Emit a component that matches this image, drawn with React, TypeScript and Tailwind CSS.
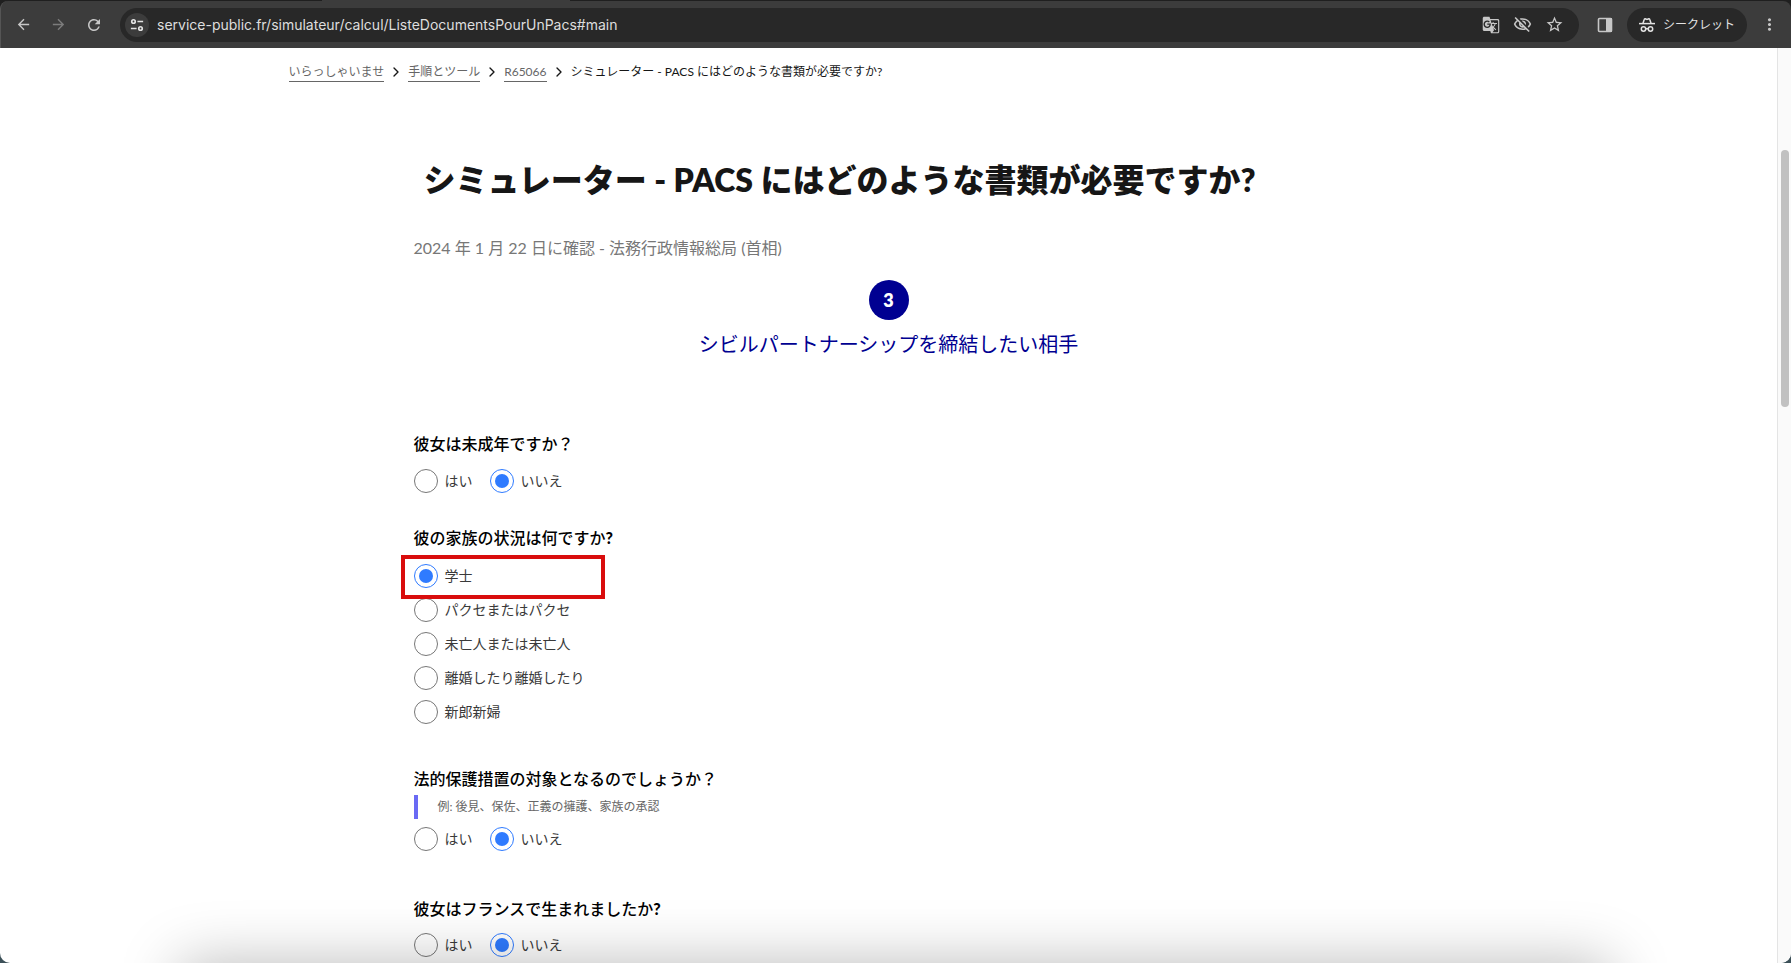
import type { ReactNode } from 'react'
import { ChevronRight } from 'lucide-react'
import {
  MdArrowBack,
  MdArrowForward,
  MdRefresh,
  MdGTranslate,
  MdOutlineVisibilityOff,
  MdStarBorder,
  MdMoreVert,
} from 'react-icons/md'

const cls = {
  radio:
    'appearance-none shrink-0 w-6 h-6 rounded-full border border-[#777] bg-white bg-clip-content p-[4px] checked:border-[#2f7bff] checked:bg-[#2f7bff]',
  label: 'flex items-center gap-[7px] h-6 text-[14px] leading-6 text-[#3a3a3a]',
  iconButton: 'flex items-center justify-center shrink-0',
  crumb: 'border-b border-[#666] text-[#666] leading-[19px]',
}

const situations = ['学士', 'パクセまたはパクセ', '未亡人または未亡人', '離婚したり離婚したり', '新郎新婦']

function SiteInfoIcon() {
  return (
    <svg width="14" height="14" viewBox="0 0 16 16" fill="none" stroke="currentColor" strokeWidth="1.9">
      <circle cx="4" cy="4" r="2" />
      <path d="M8.5 4H15M1 12h6.5" />
      <circle cx="12" cy="12" r="2" />
    </svg>
  )
}

function SidePanelIcon() {
  return (
    <svg width="16" height="16" viewBox="0 0 16 16">
      <rect x="1.5" y="1.5" width="13" height="13" rx="1" fill="none" stroke="currentColor" strokeWidth="1.6" />
      <path d="M9 1h6v14H9z" fill="currentColor" />
    </svg>
  )
}

function IncognitoIcon() {
  return (
    <svg width="16" height="16" viewBox="0 0 16 16" fill="none" stroke="currentColor" strokeWidth="1.5">
      <path d="M4 6.2 5.3 2.3c.1-.4.5-.6.9-.5L8 2.4l1.8-.6c.4-.1.8.1.9.5L12 6.2" />
      <path d="M0 6.6h16" />
      <circle cx="4.5" cy="12" r="2.2" />
      <circle cx="11.5" cy="12" r="2.2" />
      <path d="M6.7 12q1.3-.8 2.6 0" />
    </svg>
  )
}

function Toolbar() {
  return (
    <header className="bg-[#1f1f1f] shrink-0">
      {/* Bottom edge of the active tab */}
      <div className="ml-[322px] w-[248px] h-px bg-[#3c3c3c]" />
      <div className="flex items-center h-[47px] rounded-t-[8px] bg-[#3c3c3c] border-l border-[#555] px-3 text-[#c7c7c7]">
        <button className={`${cls.iconButton} w-5`} aria-label="戻る"><MdArrowBack size={17} /></button>
        <button className={`${cls.iconButton} w-5 ml-[15px] text-[#7c7c7c]`} aria-label="進む"><MdArrowForward size={17} /></button>
        <button className={`${cls.iconButton} w-5 ml-4`} aria-label="再読み込み"><MdRefresh size={18} /></button>

        {/* Address bar */}
        <div className="flex flex-1 items-center ml-4 h-[34px] rounded-full bg-[#282828] pl-[5px] pr-[15px]">
          <button className="flex items-center justify-center w-6 h-6 rounded-full bg-[#3c3c3c] text-[#e3e3e3]" aria-label="サイト情報">
            <SiteInfoIcon />
          </button>
          <input
            className="flex-1 ml-2 bg-transparent outline-none font-['Inter',sans-serif] text-[14px] text-[#dedede]"
            aria-label="アドレス"
            defaultValue="service-public.fr/simulateur/calcul/ListeDocumentsPourUnPacs#main"
          />
          <div className="flex items-center gap-[13px]">
            <button className={cls.iconButton} aria-label="翻訳"><MdGTranslate size={18} /></button>
            <button className={cls.iconButton} aria-label="Cookie"><MdOutlineVisibilityOff size={19} /></button>
            <button className={cls.iconButton} aria-label="ブックマーク"><MdStarBorder size={19} /></button>
          </div>
        </div>

        <button className={`${cls.iconButton} ml-[18px]`} aria-label="サイドパネル"><SidePanelIcon /></button>
        <button className="flex items-center gap-2 shrink-0 ml-[14px] h-[34px] rounded-full bg-[#282828] px-3 text-[#e3e3e3] text-[12px]">
          <IncognitoIcon />
          シークレット
        </button>
        <button className={`${cls.iconButton} ml-3 w-5`} aria-label="メニュー"><MdMoreVert size={19} /></button>
      </div>
    </header>
  )
}

function Breadcrumb() {
  return (
    <nav className="mx-auto w-full max-w-[1200px] flex items-center gap-1 pt-[14px] text-[12px] text-[#161616]">
      <a href="#" className={cls.crumb}>いらっしゃいませ</a>
      <ChevronRight size={16} />
      <a href="#" className={cls.crumb}>手順とツール</a>
      <ChevronRight size={16} />
      <a href="#" className={cls.crumb}>R65066</a>
      <ChevronRight size={16} />
      <span>シミュレーター - PACS にはどのような書類が必要ですか?</span>
    </nav>
  )
}

function Question({ title, children }: { title: ReactNode; children: ReactNode }) {
  return (
    <fieldset>
      <legend className="text-[16px] leading-6 font-medium text-black">{title}</legend>
      {children}
    </fieldset>
  )
}

function YesNo({ name }: { name: string }) {
  return (
    <div className="flex gap-[17px]">
      <label className={cls.label}>
        <input type="radio" name={name} className={cls.radio} />
        はい
      </label>
      <label className={cls.label}>
        <input type="radio" name={name} className={cls.radio} defaultChecked />
        いいえ
      </label>
    </div>
  )
}

export default function App() {
  return (
    <div className="h-screen bg-[#3c5058]">
      <div className="relative flex flex-col h-full overflow-hidden rounded-b-[10px] bg-white font-['Lato','Noto_Sans_CJK_JP',sans-serif]">
        <Toolbar />
        <div className="flex flex-1 min-h-0">
          <div className="flex-1 min-w-0 overflow-hidden">
            <Breadcrumb />
            <main className="mx-auto w-full max-w-[950px]">
              <h1 className="mt-[74px] pl-[10px] text-[32px] leading-[48px] font-extrabold text-[#161616]">
                シミュレーター - PACS にはどのような書類が必要ですか?
              </h1>
              <p className="mt-[32px] text-[16px] leading-6 text-[#777]">2024 年 1 月 22 日に確認 - 法務行政情報総局 (首相)</p>

              {/* Step */}
              <div className="flex flex-col items-center mt-[20px]">
                <span className="flex items-center justify-center w-10 h-10 rounded-full bg-[#000091] text-white text-[18px] font-extrabold">3</span>
                <h2 className="mt-[10px] text-[20px] leading-7 text-[#000091]">シビルパートナーシップを締結したい相手</h2>
              </div>

              <form className="mt-[74px]">
                <Question title="彼女は未成年ですか？">
                  <div className="mt-[13px]"><YesNo name="minor" /></div>
                </Question>

                <div className="mt-[33px]">
                  <Question title={<>彼の家族の状況は何ですか<b className="font-black">?</b></>}>
                    <div className="relative flex flex-col gap-[10px] mt-[14px]">
                      {situations.map((s, i) => (
                        <label key={s} className={cls.label}>
                          <input type="radio" name="situation" className={cls.radio} defaultChecked={i === 0} />
                          {s}
                        </label>
                      ))}
                      {/* Highlight round the first answer */}
                      <div className="absolute -left-[13px] -top-[9px] w-[204px] h-[44px] border-4 border-[#d90d0d] pointer-events-none" />
                    </div>
                  </Question>
                </div>

                <div className="mt-[43px]">
                  <Question title="法的保護措置の対象となるのでしょうか？">
                    <p className="mt-1 mb-2 border-l-4 border-[#6a6af4] pl-5 text-[12px] leading-6 text-[#666]">
                      例: 後見、保佐、正義の擁護、家族の承認
                    </p>
                    <YesNo name="protection" />
                  </Question>
                </div>

                <div className="mt-[46px]">
                  <Question title={<>彼女はフランスで生まれましたか<b className="font-black">?</b></>}>
                    <div className="mt-[12px]"><YesNo name="birth" /></div>
                  </Question>
                </div>
              </form>
            </main>
          </div>

          {/* Scrollbar */}
          <div className="w-[14px] shrink-0 border-l border-[#e4e4e4] bg-[#fafafa] pt-[102px] pl-[3px]">
            <div className="w-2 h-[257px] rounded-full bg-[#c1c1c1]" />
          </div>
        </div>

        {/* Soft shade along the bottom edge */}
        <div className="absolute inset-x-[180px] top-full h-20 shadow-[0_0_60px_0_rgba(0,0,0,0.27)] pointer-events-none" />
      </div>
    </div>
  )
}
